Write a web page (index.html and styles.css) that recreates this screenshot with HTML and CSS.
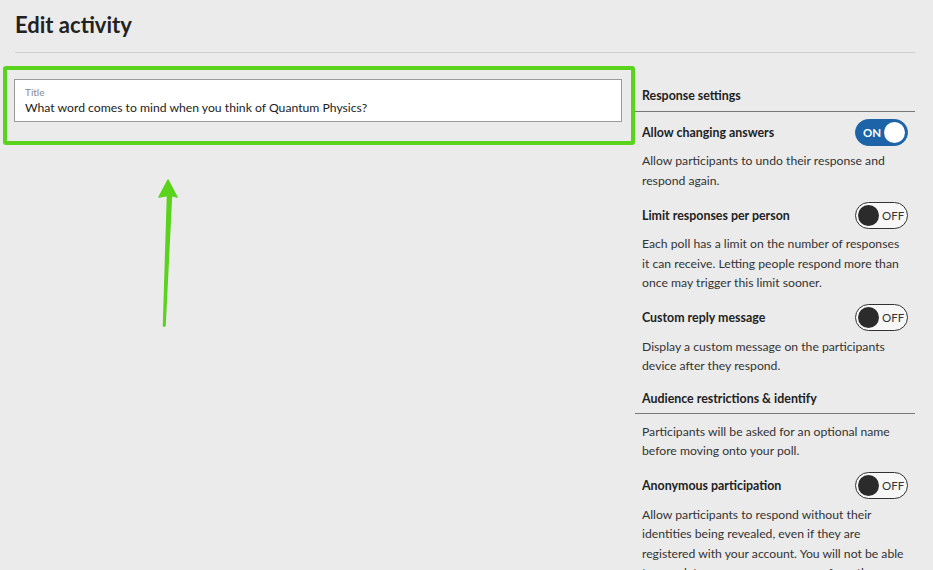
FILE: index.html
```html
<!DOCTYPE html>
<html lang="en">
<head>
<meta charset="utf-8">
<title>Edit activity</title>
<link rel="stylesheet" href="styles.css">
</head>
<body>
<div class="page">
  <header class="page-header">
    <h1 class="page-title">Edit activity</h1>
  </header>
  <div class="main">
    <section class="left">
      <div class="field">
        <label class="field-label">Title</label>
        <div class="field-value">What word comes to mind when you think of Quantum Physics?</div>
      </div>
    </section>
    <aside class="settings">
      <h2 class="section-title">Response settings</h2>
      <div class="setting">
        <div class="setting-row">
          <span class="setting-name">Allow changing answers</span>
          <span class="toggle on"><span class="toggle-text">ON</span><span class="knob"></span></span>
        </div>
        <p class="setting-desc">Allow participants to undo their response and respond again.</p>
      </div>
      <div class="setting">
        <div class="setting-row">
          <span class="setting-name">Limit responses per person</span>
          <span class="toggle off"><span class="knob"></span><span class="toggle-text">OFF</span></span>
        </div>
        <p class="setting-desc">Each poll has a limit on the number of responses it can receive. Letting people respond more than once may trigger this limit sooner.</p>
      </div>
      <div class="setting">
        <div class="setting-row">
          <span class="setting-name">Custom reply message</span>
          <span class="toggle off"><span class="knob"></span><span class="toggle-text">OFF</span></span>
        </div>
        <p class="setting-desc">Display a custom message on the participants device after they respond.</p>
      </div>
      <h2 class="section-title second">Audience restrictions &amp; identify</h2>
      <p class="setting-desc plain">Participants will be asked for an optional name before moving onto your poll.</p>
      <div class="setting">
        <div class="setting-row">
          <span class="setting-name">Anonymous participation</span>
          <span class="toggle off"><span class="knob"></span><span class="toggle-text">OFF</span></span>
        </div>
        <p class="setting-desc">Allow participants to respond without their identities being revealed, even if they are registered with your account. You will not be able to correlate anonymous responses from the same participant.</p>
      </div>
    </aside>
  </div>
  <div class="highlight"></div>
  <svg class="arrow" width="40" height="160" viewBox="0 0 40 160">
    <path d="M22 2 L31 19 L25.5 17.5 L19 148 L17.5 148 L21.5 17.5 L13 19 Z" fill="#5ad31c" stroke="#5ad31c" stroke-width="1.5" stroke-linejoin="round"/>
  </svg>
</div>
</body>
</html>
```

FILE: styles.css
```css
* { box-sizing: border-box; }
html, body { margin: 0; padding: 0; }
body {
  background: #ebebeb;
  font-family: "Lato", "Open Sans", sans-serif;
  color: #222;
  width: 933px;
  height: 570px;
  overflow: hidden;
}
.page {
  position: relative;
  padding: 0 18px 0 15px;
}
.page-header {
  border-bottom: 1px solid #cfcfcf;
  padding-top: 10px;
  height: 53px;
}
.page-title {
  margin: 0;
  font-size: 22px;
  font-weight: 700;
  line-height: 30px;
  color: #222;
}
.main {
  display: grid;
  grid-template-columns: 1fr 280px;
  column-gap: 13px;
}
.left {
  padding-top: 26px;
}
.field {
  background: #fff;
  border: 1px solid #9a9a9a;
  width: 608px;
  margin-left: -1px;
  height: 43px;
  padding: 6px 10px 0;
}
.field-label {
  display: block;
  font-size: 10px;
  line-height: 13px;
  color: #888;
}
.field-value {
  font-size: 12.2px;
  line-height: 18px;
  color: #222;
}
.settings {
  padding-top: 33px;
}
.section-title {
  margin: 0;
  font-size: 12.4px;
  font-weight: 700;
  line-height: 20px;
  padding: 0 7px 5px;
  border-bottom: 1px solid #777;
  color: #222;
}
.section-title.second {
  margin-top: 13px;
  padding-bottom: 4px;
}
.setting {
  padding: 0 7px;
}
.setting-row {
  display: flex;
  align-items: center;
  justify-content: space-between;
  height: 39px;
  padding-top: 1px;
}
.setting-name {
  font-size: 12.4px;
  font-weight: 700;
  color: #222;
}
.setting-desc {
  margin: 0 0 5px;
  font-size: 12.2px;
  line-height: 19.5px;
  color: #333;
}
.setting-desc.plain {
  padding: 8px 7px 0;
  margin-bottom: 5px;
}
.toggle {
  display: inline-flex;
  align-items: center;
  width: 53px;
  height: 27px;
  border-radius: 14px;
  padding: 0 2px;
  font-size: 11.5px;
}
.toggle .knob {
  width: 21px;
  height: 21px;
  border-radius: 50%;
  flex: none;
}
.toggle.on {
  background: #1c63a8;
  border: 1px solid #1c63a8;
  justify-content: space-between;
  padding-left: 7px;
}
.toggle.on .toggle-text {
  color: #fff;
  font-weight: 700;
}
.toggle.on .knob {
  background: #fff;
}
.toggle.off {
  background: #f7f7f7;
  border: 1px solid #333;
  gap: 3px;
}
.toggle.off .knob {
  background: #2b2b2b;
}
.toggle.off .toggle-text {
  color: #333;
}
.highlight {
  position: absolute;
  left: 3px;
  top: 66px;
  width: 632px;
  height: 79px;
  border: 4px solid #5ad31c;
  border-radius: 3px;
}
.arrow {
  position: absolute;
  left: 146px;
  top: 178px;
}
```
